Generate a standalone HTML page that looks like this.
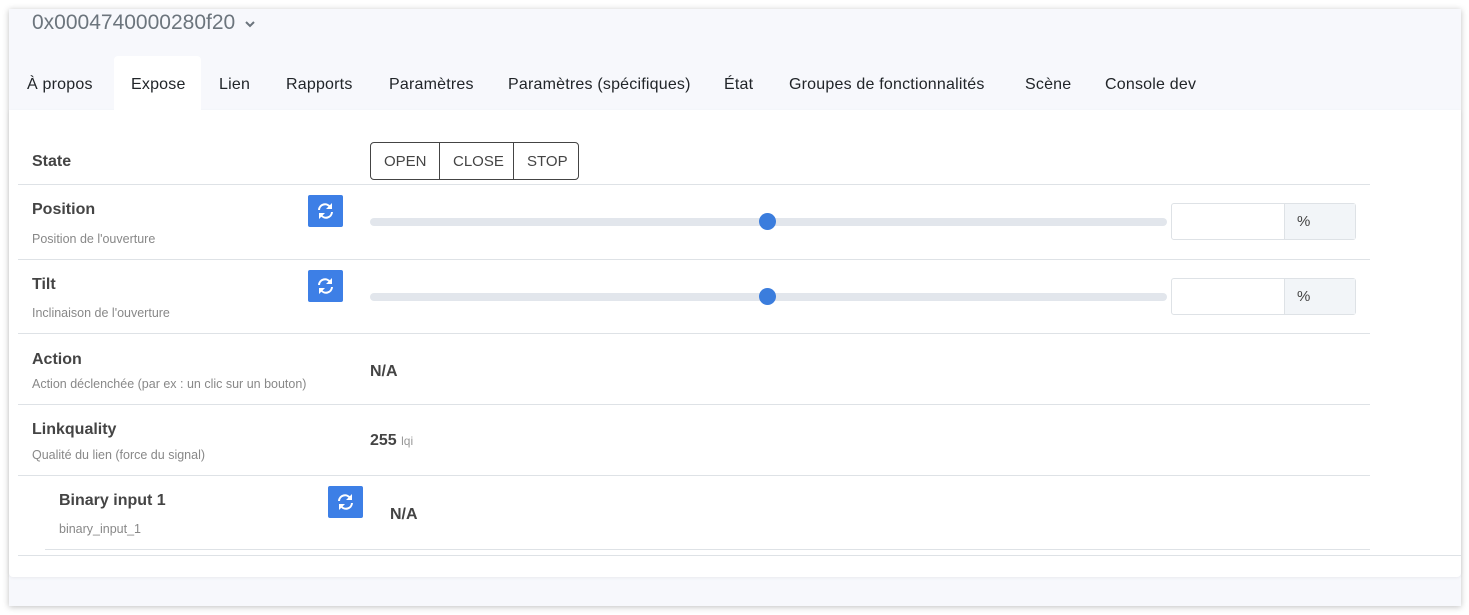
<!DOCTYPE html>
<html><head><style>
body{margin:0;width:1469px;height:615px;background:#fff;font-family:"Liberation Sans",sans-serif;position:relative;overflow:hidden;color:#343a40}
.card{position:absolute;left:9px;top:9px;width:1452px;height:597px;background:#f7f8fc;box-shadow:0 1px 6px rgba(0,0,0,.25)}
.a{position:absolute;white-space:nowrap}
.body{position:absolute;left:0;top:101px;width:1452px;height:467px;background:#fff;border-radius:0 0 4px 4px;box-shadow:0 1px 3px rgba(0,0,0,.06)}
.tab{position:absolute;top:76px;font-size:16px;color:#212529;letter-spacing:0.2px}
.hl{position:absolute;height:1px;background:#dee2e6}
.lbl{font-size:16px;font-weight:bold;color:#444}
.sub{font-size:12.5px;color:#888}
.btn{position:absolute;width:35px;height:32px;background:#3d7fe6;border-radius:2px}
.track{position:absolute;left:370px;width:797px;height:8px;background:#e2e6ec;border-radius:4px}
.dot{position:absolute;width:17px;height:17px;border-radius:50%;background:#3b7ddd}
.inp{position:absolute;left:1171px;width:185px;height:37px;border:1px solid #dee2e6;border-radius:3px;box-sizing:border-box;background:#fff}
.inp span{position:absolute;left:112px;top:0;right:0;bottom:0;background:#f2f5f8;border-left:1px solid #dee2e6;font-size:15px;padding:9px 0 0 12px;color:#444}
</style></head><body>
<div class="card">
<div class="body"></div>
</div>
<div class="a" style="left:114px;top:56px;width:87px;height:56px;background:#fff;border-radius:4px 4px 0 0"></div>
<div class="a" style="left:32px;top:11px;font-size:21px;color:#6c757d">0x0004740000280f20 <svg width="12" height="10" style="margin-left:3px"><path d="M2 3l4 4 4-4" fill="none" stroke="#6c757d" stroke-width="2"/></svg></div>
<div class="tab" style="left:27px">À propos</div>
<div class="tab" style="left:131px">Expose</div>
<div class="tab" style="left:219px">Lien</div>
<div class="tab" style="left:286px">Rapports</div>
<div class="tab" style="left:389px">Paramètres</div>
<div class="tab" style="left:508px">Paramètres (spécifiques)</div>
<div class="tab" style="left:724px">État</div>
<div class="tab" style="left:789px">Groupes de fonctionnalités</div>
<div class="tab" style="left:1025px">Scène</div>
<div class="tab" style="left:1105px">Console dev</div>

<div class="a lbl" style="left:32px;top:153px">State</div>
<div class="a" style="left:370px;top:142px;width:207px;height:36px;border:1px solid #444;border-radius:4px;font-size:15px;color:#444">
<span class="a" style="left:13px;top:10px">OPEN</span>
<span class="a" style="left:68px;top:0;width:1px;height:36px;background:#444"></span>
<span class="a" style="left:82px;top:10px">CLOSE</span>
<span class="a" style="left:142px;top:0;width:1px;height:36px;background:#444"></span>
<span class="a" style="left:156px;top:10px">STOP</span>
</div>
<div class="hl" style="left:18px;top:184px;width:1352px"></div>

<div class="a lbl" style="left:32px;top:201px">Position</div>
<div class="a sub" style="left:32px;top:232px">Position de l'ouverture</div>
<div class="btn" style="left:308px;top:195px"><svg width="35" height="32"><g fill="none" stroke="#fff" stroke-width="2"><path d="M11 15a6 6 0 0 1 11-3"/><path d="M24 17a6 6 0 0 1-11 3"/></g><path d="M24 8v6h-6z M11 24v-6h6z" fill="#fff"/></svg></div>
<div class="track" style="top:218px"></div><div class="dot" style="left:759px;top:213px"></div>
<div class="inp" style="top:203px"><span>%</span></div>
<div class="hl" style="left:18px;top:259px;width:1352px"></div>

<div class="a lbl" style="left:32px;top:276px">Tilt</div>
<div class="a sub" style="left:32px;top:306px">Inclinaison de l'ouverture</div>
<div class="btn" style="left:308px;top:270px"><svg width="35" height="32"><g fill="none" stroke="#fff" stroke-width="2"><path d="M11 15a6 6 0 0 1 11-3"/><path d="M24 17a6 6 0 0 1-11 3"/></g><path d="M24 8v6h-6z M11 24v-6h6z" fill="#fff"/></svg></div>
<div class="track" style="top:293px"></div><div class="dot" style="left:759px;top:288px"></div>
<div class="inp" style="top:278px"><span>%</span></div>
<div class="hl" style="left:18px;top:333px;width:1352px"></div>

<div class="a lbl" style="left:32px;top:351px">Action</div>
<div class="a sub" style="left:32px;top:377px">Action déclenchée (par ex : un clic sur un bouton)</div>
<div class="a lbl" style="left:370px;top:363px">N/A</div>
<div class="hl" style="left:18px;top:404px;width:1352px"></div>

<div class="a lbl" style="left:32px;top:421px">Linkquality</div>
<div class="a sub" style="left:32px;top:448px">Qualité du lien (force du signal)</div>
<div class="a lbl" style="left:370px;top:432px">255 <span style="font-size:12px;font-weight:normal;color:#999">lqi</span></div>
<div class="hl" style="left:18px;top:475px;width:1352px"></div>

<div class="a lbl" style="left:59px;top:492px">Binary input 1</div>
<div class="a sub" style="left:59px;top:522px">binary_input_1</div>
<div class="btn" style="left:328px;top:486px"><svg width="35" height="32"><g fill="none" stroke="#fff" stroke-width="2"><path d="M11 15a6 6 0 0 1 11-3"/><path d="M24 17a6 6 0 0 1-11 3"/></g><path d="M24 8v6h-6z M11 24v-6h6z" fill="#fff"/></svg></div>
<div class="a lbl" style="left:390px;top:506px">N/A</div>
<div class="hl" style="left:45px;top:549px;width:1325px"></div>
<div class="hl" style="left:18px;top:555px;width:1443px"></div>
</body></html>
